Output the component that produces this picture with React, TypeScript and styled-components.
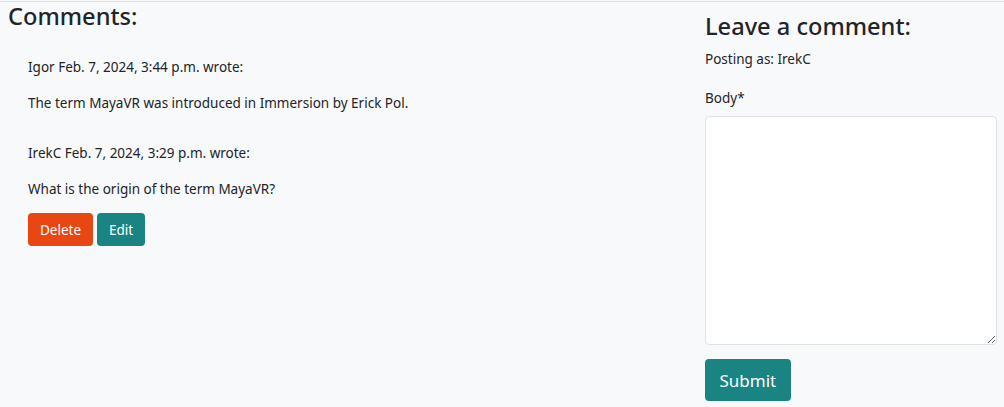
import React from "react";
import styled, { createGlobalStyle } from "styled-components";

const Global = createGlobalStyle`
  html, body { margin: 0; padding: 0; background: #f8f9fa; }
  body { font-family: "Noto Sans", "Open Sans", sans-serif; color: #212529; }
  * { box-sizing: border-box; }
`;

const Page = styled.div`
  border-top: 1px solid #dee2e6;
  margin-top: 1px;
  display: flex;
  height: 405px;
  overflow: hidden;
`;

const Left = styled.section`
  width: 705px;
  padding-left: 8px;
`;

const Right = styled.section`
  width: 292px;
  padding-top: 10px;
`;

const H3 = styled.h3`
  margin: 0;
  font-size: 23.6px;
  font-weight: 500;
  line-height: 1.2;
`;

const CommentList = styled.div`
  padding: 27px 0 0 20px;
  display: flex;
  flex-direction: column;
`;

const Comment = styled.div`
  margin-bottom: 16px;
`;

const Meta = styled.p`
  margin: 0 0 16px;
  font-size: 13.5px;
  line-height: 20px;
`;

const Body = styled.p`
  margin: 0 0 14px;
  font-size: 13.5px;
  line-height: 20px;
`;

const Actions = styled.div`
  display: flex;
  gap: 4px;
`;

const Btn = styled.button<{ $variant: "danger" | "teal"; $big?: boolean }>`
  font-family: inherit;
  border: none;
  border-radius: 4px;
  color: #fff;
  background: ${p => (p.$variant === "danger" ? "#e84613" : "#198482")};
  font-size: ${p => (p.$big ? "17px" : "13.5px")};
  height: ${p => (p.$big ? "42px" : "33px")};
  padding: ${p => (p.$big ? "0 14.5px" : "0 12px")};
  cursor: pointer;
`;

const Posting = styled.p`
  margin: 9px 0 0;
  font-size: 13.5px;
  line-height: 20px;
`;

const Label = styled.label`
  display: block;
  margin-top: 19px;
  font-size: 13.5px;
  line-height: 20px;
`;

const TextArea = styled.textarea`
  display: block;
  margin-top: 8px;
  width: 292px;
  height: 229px;
  background: #fff;
  border: 1px solid #dee2e6;
  border-radius: 4px;
  font-family: inherit;
`;

const SubmitRow = styled.div`
  margin-top: 14px;
`;

export default function App() {
  return (
    <>
      <Global />
      <Page>
        <Left>
          <H3>Comments:</H3>
          <CommentList>
            <Comment>
              <Meta>Igor Feb. 7, 2024, 3:44 p.m. wrote:</Meta>
              <Body>The term MayaVR was introduced in Immersion by Erick Pol.</Body>
            </Comment>
            <Comment>
              <Meta>IrekC Feb. 7, 2024, 3:29 p.m. wrote:</Meta>
              <Body>What is the origin of the term MayaVR?</Body>
              <Actions>
                <Btn $variant="danger">Delete</Btn>
                <Btn $variant="teal">Edit</Btn>
              </Actions>
            </Comment>
          </CommentList>
        </Left>
        <Right>
          <H3>Leave a comment:</H3>
          <Posting>Posting as: IrekC</Posting>
          <Label>Body*</Label>
          <TextArea />
          <SubmitRow>
            <Btn $variant="teal" $big>Submit</Btn>
          </SubmitRow>
        </Right>
      </Page>
    </>
  );
}
